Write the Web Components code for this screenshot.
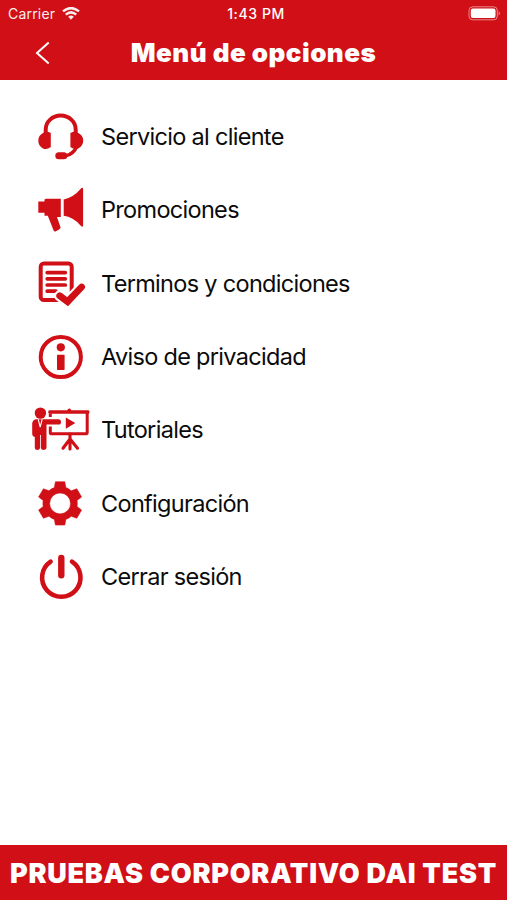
<!DOCTYPE html>
<html lang="es">
<head>
<meta charset="utf-8">
<title>Menú de opciones</title>
<style>
html,body{margin:0;height:100%;background:#fff}
body{font-family:Inter,"Liberation Sans",sans-serif;--red:#d00f17}
</style>
</head>
<body>
<options-screen></options-screen>
<script>
const define = (name, html) => customElements.define(name, class extends HTMLElement {
  constructor() {
    super();
    this.attachShadow({mode: 'open'}).innerHTML = html;
  }
});

const icons = {
  headset: `<path d="M15.7 27V22.5a15 14 0 0 1 30 0V27" fill="none" stroke="currentColor" stroke-width="4"/>
    <path d="M14 25.5Q17 24 20.8 26V40Q17 43 13 41.5Q8.3 39 8.3 33.5Q8.3 28 14 25.5ZM47.4 25.5Q44.4 24 40.4 26V40Q44.2 43 48.2 41.5Q53.2 39 53.2 33.5Q53.2 28 47.4 25.5Z"/>
    <path d="M47 39Q43.5 47.5 35 49" fill="none" stroke="currentColor" stroke-width="3.4"/>
    <rect x="25.3" y="45.2" width="12" height="7" rx="3.5"/>`,
  horn: `<path d="M8.3 21.4H14.5V19.5L16 18.7H30.8V37H27L30.5 47.3Q30.7 48.7 29 49.5L26 51.3Q24.3 52 23.5 50.2L17.8 35.8H14.5V32.8H8.3Z"/>
    <path d="M33.7 19.5Q44 17 50.5 9Q53.1 6.7 53.1 9V45.2Q53.1 48 50.5 45.4Q43 37 33.7 35.8Z"/>`,
  terms: `<rect x="10.7" y="9.5" width="31" height="36.6" rx="3.2" fill="none" stroke="currentColor" stroke-width="4"/>
    <path d="M17.2 18.6H35.3M17.2 24.8H35.3M17.2 31H35.3M17.2 37.2H26" fill="none" stroke="currentColor" stroke-width="3.7" stroke-linecap="round"/>
    <path d="M29.7 41.8L37.6 47.7L51.6 33" fill="none" stroke="#fff" stroke-width="11" stroke-linecap="round"/>
    <path d="M29.7 41.8L37.6 47.7L51.6 33" fill="none" stroke="currentColor" stroke-width="6.8" stroke-linecap="round"/>`,
  info: `<circle cx="30.8" cy="30" r="20.1" fill="none" stroke="currentColor" stroke-width="4"/>
    <circle cx="30.8" cy="20.3" r="4.1"/><rect x="27" y="27.8" width="7.6" height="15.2" rx=".7"/>`,
  tutorial: `<circle cx="10.4" cy="13.1" r="5.7"/>
    <path d="M5.5 19.2H29Q31 19.2 31 21.7Q31 24.6 29 24.6H16.5V48Q16 50 13.6 50Q11.2 50 10.9 48V35H10.1V48Q9.5 50 7.2 50Q5.1 50 4.8 48V37Q2 36.5 2.2 33V23.5Q2.5 20.2 5.5 19.2Z"/>
    <path d="M8.2 19.2L10.2 27L12.2 19.2" fill="none" stroke="#fff" stroke-width="1.1"/>
    <path d="M20.3 17V13.5M20.3 26.5V32.4Q20.3 33.7 21.5 33.7H55.8Q57.2 33.7 57.2 32.4V13" fill="none" stroke="currentColor" stroke-width="3"/>
    <rect x="18.3" y="10.3" width="41.1" height="3.5" rx="1.4"/><circle cx="39.3" cy="10.2" r="1.8"/>
    <path d="M35.8 17.5L45.3 23L35.8 28.7Z"/>
    <path d="M40 34V49M40 39L33 48.2M40 39L47.5 48.2" fill="none" stroke="currentColor" stroke-width="3.1" stroke-linecap="round"/>`,
  gear: `<path fill-rule="evenodd" d="M25.4 7.8H34.8L35.8 13.6Q38.8 14.6 41.2 16.8L46.8 14.8L51.6 23L47 26.4Q47.6 29.5 47 32.6L51.6 36L46.8 44.2L41.2 42.2Q38.8 44.4 35.8 45.4L34.8 51H25.4L24.4 45.4Q21.4 44.4 19 42.2L13.4 44.2L8.6 36L13.2 32.6Q12.6 29.5 13.2 26.4L8.6 23L13.4 14.8L19 16.8Q21.4 14.6 24.4 13.6ZM30.1 18.9A10.5 10.5 0 1 0 30.1 39.9A10.5 10.5 0 1 0 30.1 18.9Z" stroke="currentColor" stroke-width=".6" stroke-linejoin="round"/>`,
  power: `<path d="M20.6 14.6A19.2 19.2 0 1 0 42 14.6" fill="none" stroke="currentColor" stroke-width="4.6" stroke-linecap="round"/>
    <path d="M31.3 11V28.2" fill="none" stroke="currentColor" stroke-width="6.4" stroke-linecap="round"/>`
};

customElements.define('menu-icon', class extends HTMLElement {
  connectedCallback() {
    const root = this.shadowRoot || this.attachShadow({mode: 'open'});
    root.innerHTML = `<style>:host{display:block;width:60px;height:60px;color:var(--red)}svg{display:block}</style>
      <svg width="60" height="60" viewBox="0 0 60 60" fill="currentColor">${icons[this.getAttribute('name')]}</svg>`;
  }
});

customElements.define('menu-row', class extends HTMLElement {
  connectedCallback() {
    const root = this.shadowRoot || this.attachShadow({mode: 'open'});
    root.innerHTML = `<style>
      :host{display:flex;align-items:center;gap:11px;height:73.33px;padding-left:30px;font-size:23.5px;line-height:30px;letter-spacing:-.69px;color:#0b0b0b;white-space:nowrap}
      span{padding-top:.3px}
      </style><menu-icon name="${this.getAttribute('icon')}"></menu-icon><span><slot></slot></span>`;
  }
});

define('status-bar', `<style>
  :host{display:grid;grid-template-columns:1fr auto 1fr;align-items:center;height:26px;padding:1px 6px 0 8px;box-sizing:border-box;color:#fff;font-size:14px;line-height:18px}
  .l{display:flex;align-items:center;gap:7px;letter-spacing:.2px;opacity:.93}
  .t{font-weight:500;font-size:14px;letter-spacing:.6px;padding-left:3px}
  .b{justify-self:end}svg{display:block}
  </style>
  <div class="l"><span>Carrier</span><svg width="18" height="13" viewBox="0 0 18 13"><g fill="none" stroke="#fff" stroke-width="2.5"><path d="M1 4.4Q9-2.2 17 4.4"/><path d="M3.8 7.6Q9 3.2 14.2 7.6"/></g><path d="M6.2 9.7Q9 7.5 11.8 9.7L9 12.7Z" fill="#fff"/></svg></div>
  <span class="t">1:43 PM</span>
  <svg class="b" width="33" height="15" viewBox="0 0 33 15"><rect x="1" y=".8" width="28.3" height="13" rx="3.7" fill="none" stroke="#fff" stroke-opacity=".5"/><rect x="2.8" y="2.6" width="24.7" height="9.4" rx="2" fill="#fff"/><path d="M30.7 5Q33 7.3 30.7 9.6Z" fill="#fff" fill-opacity=".55"/></svg>`);

define('nav-bar', `<style>
  :host{display:grid;grid-template-columns:60px 1fr 60px;align-items:center;height:54px;color:#fff}
  svg{display:block;margin-left:34px}
  h1{margin:0;font-size:26px;line-height:32px;font-weight:900;letter-spacing:.47px;text-align:center;white-space:nowrap}
  </style><svg width="18" height="26" viewBox="0 0 18 26"><path d="M14.7 2.5L3 13L14.7 23.5" fill="none" stroke="#fff" stroke-width="2"/></svg><h1><slot></slot></h1>`);

define('brand-footer', `<style>
  :host{display:flex;justify-content:center;align-items:center;height:55px;background:var(--red);color:#fff;font-size:27px;line-height:33px;font-weight:900;letter-spacing:.74px;white-space:nowrap}
  span{padding-top:1px}
  </style><span><slot></slot></span>`);

define('options-screen', `<style>
  :host{display:flex;flex-direction:column;height:900px;width:507px;overflow:hidden}
  header{background:var(--red)}
  main{flex:1;padding-top:20.3px;min-height:0}
  </style>
  <header><status-bar></status-bar><nav-bar>Menú de opciones</nav-bar></header>
  <main>
    <menu-row icon="headset">Servicio al cliente</menu-row>
    <menu-row icon="horn">Promociones</menu-row>
    <menu-row icon="terms">Terminos y condiciones</menu-row>
    <menu-row icon="info">Aviso de privacidad</menu-row>
    <menu-row icon="tutorial">Tutoriales</menu-row>
    <menu-row icon="gear">Configuración</menu-row>
    <menu-row icon="power">Cerrar sesión</menu-row>
  </main>
  <brand-footer>PRUEBAS CORPORATIVO DAI TEST</brand-footer>`);
</script>
</body>
</html>
